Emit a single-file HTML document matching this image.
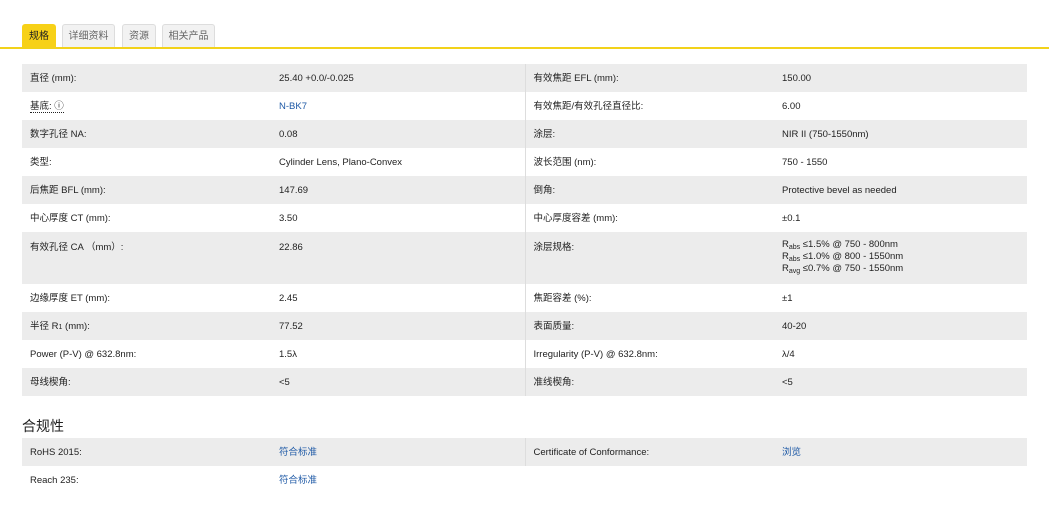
<!DOCTYPE html>
<html><head><meta charset="utf-8"><style>
body{margin:0;background:#fff;font-family:"Liberation Sans","Noto Sans CJK SC",sans-serif;font-size:9.5px;color:#222;}
.tabs{position:absolute;left:0;top:0;width:1049px;height:49px;border-bottom:2px solid #f2d21a;box-sizing:border-box;}
.tab{position:absolute;top:24px;height:23px;line-height:23px;text-align:center;font-size:10px;color:#666;background:#f2f2f2;border:1px solid #ddd;border-bottom:none;border-radius:3px 3px 0 0;box-sizing:border-box;}
.tab.on{background:#f7d117;color:#222;border-color:#f7d117;}
table{position:absolute;left:22px;border-collapse:collapse;width:1005px;table-layout:fixed;}
td{padding:2px 8px 0;height:26px;line-height:12px;vertical-align:middle;white-space:nowrap;}
td *{vertical-align:baseline}
tr.g td{background:#ececec;}
td.c2{border-right:1px solid #ddd}
tr.t td{height:42px;vertical-align:top;padding-top:10px}
a{color:#1f5aa6;text-decoration:none}
h3{position:absolute;left:22px;top:416px;margin:0;font-size:14px;font-weight:normal;color:#222}
sub{font-size:7px;line-height:0;vertical-align:-2px}
</style></head><body>
<div class="tabs">
<div class="tab on" style="left:22px;width:34px">规格</div>
<div class="tab" style="left:62px;width:53px">详细资料</div>
<div class="tab" style="left:122px;width:34px">资源</div>
<div class="tab" style="left:162px;width:53px">相关产品</div>
</div>
<table style="top:64px">
<colgroup><col style="width:249px"><col style="width:254px"><col style="width:249px"><col></colgroup>
<tr class="g"><td>直径 (mm):</td><td class="c2">25.40 +0.0/-0.025</td><td>有效焦距 EFL (mm):</td><td>150.00</td></tr>
<tr><td><span style="border-bottom:1px dotted #222">基底: ⓘ</span></td><td class="c2"><a>N-BK7</a></td><td>有效焦距/有效孔径直径比:</td><td>6.00</td></tr>
<tr class="g"><td>数字孔径 NA:</td><td class="c2">0.08</td><td>涂层:</td><td>NIR II (750-1550nm)</td></tr>
<tr><td>类型:</td><td class="c2">Cylinder Lens, Plano-Convex</td><td>波长范围 (nm):</td><td>750 - 1550</td></tr>
<tr class="g"><td>后焦距 BFL (mm):</td><td class="c2">147.69</td><td>倒角:</td><td>Protective bevel as needed</td></tr>
<tr><td>中心厚度 CT (mm):</td><td class="c2">3.50</td><td>中心厚度容差 (mm):</td><td>±0.1</td></tr>
<tr class="g t"><td>有效孔径 CA （mm）:</td><td class="c2">22.86</td><td>涂层规格:</td><td style="line-height:12px;padding-top:7px">R<sub>abs</sub> ≤1.5% @ 750 - 800nm<br>R<sub>abs</sub> ≤1.0% @ 800 - 1550nm<br>R<sub>avg</sub> ≤0.7% @ 750 - 1550nm</td></tr>
<tr><td>边缘厚度 ET (mm):</td><td class="c2">2.45</td><td>焦距容差 (%):</td><td>±1</td></tr>
<tr class="g"><td>半径 R<span style="font-size:7px">1</span> (mm):</td><td class="c2">77.52</td><td>表面质量:</td><td>40-20</td></tr>
<tr><td>Power (P-V) @ 632.8nm:</td><td class="c2">1.5λ</td><td>Irregularity (P-V) @ 632.8nm:</td><td>λ/4</td></tr>
<tr class="g"><td>母线楔角:</td><td class="c2">&lt;5</td><td>准线楔角:</td><td>&lt;5</td></tr>
</table>
<h3>合规性</h3>
<table style="top:438px">
<colgroup><col style="width:249px"><col style="width:254px"><col style="width:249px"><col></colgroup>
<tr class="g"><td>RoHS 2015:</td><td class="c2"><a>符合标准</a></td><td>Certificate of Conformance:</td><td><a>浏览</a></td></tr>
<tr><td>Reach 235:</td><td><a>符合标准</a></td><td></td><td></td></tr>
</table>
</body></html>
